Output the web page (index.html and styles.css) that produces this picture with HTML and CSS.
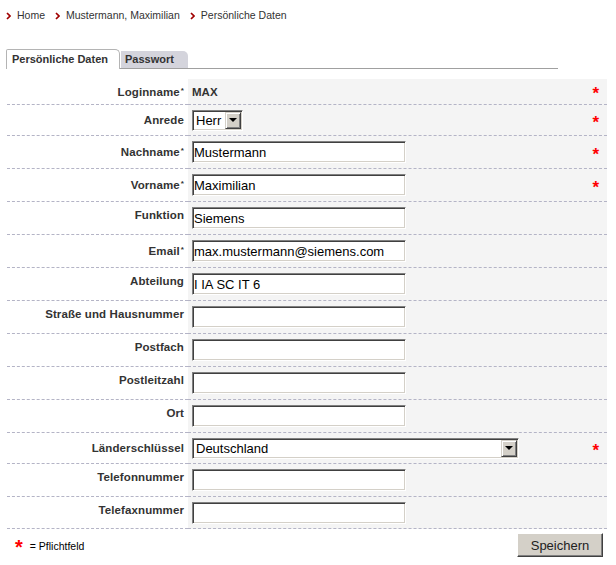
FILE: index.html
```html
<!DOCTYPE html>
<html lang="de">
<head>
<meta charset="utf-8">
<title>Persönliche Daten</title>
<link rel="stylesheet" href="styles.css">
</head>
<body>
<nav class="crumbs">
  <span class="crumb"><svg viewBox="0 0 5 8" class="chev"><polyline points="1,1 4,4 1,7"/></svg>Home</span>
  <span class="crumb"><svg viewBox="0 0 5 8" class="chev"><polyline points="1,1 4,4 1,7"/></svg>Mustermann, Maximilian</span>
  <span class="crumb"><svg viewBox="0 0 5 8" class="chev"><polyline points="1,1 4,4 1,7"/></svg>Persönliche Daten</span>
</nav>

<div class="tabs">
  <span class="tab tab-active">Persönliche Daten</span>
  <span class="tab tab-off">Passwort</span>
</div>

<div class="form">
  <div class="row row-login">
    <div class="label"><span>Loginname<sup>*</sup></span></div>
    <div class="field"><span class="static">MAX</span><span class="req">*</span></div>
  </div>
  <div class="row row-sel">
    <div class="label"><span>Anrede</span></div>
    <div class="field">
      <div class="sel sel-small"><span class="sel-val">Herr</span><span class="sel-btn"><span class="tri"></span></span></div>
      <span class="req">*</span>
    </div>
  </div>
  <div class="row">
    <div class="label"><span>Nachname<sup>*</sup></span></div>
    <div class="field"><input class="inp" type="text" value="Mustermann"><span class="req">*</span></div>
  </div>
  <div class="row">
    <div class="label"><span>Vorname<sup>*</sup></span></div>
    <div class="field"><input class="inp" type="text" value="Maximilian"><span class="req">*</span></div>
  </div>
  <div class="row">
    <div class="label lab-top"><span>Funktion</span></div>
    <div class="field"><input class="inp" type="text" value="Siemens"></div>
  </div>
  <div class="row">
    <div class="label"><span>Email<sup>*</sup></span></div>
    <div class="field"><input class="inp" type="text" value="max.mustermann@siemens.com"></div>
  </div>
  <div class="row">
    <div class="label lab-top"><span>Abteilung</span></div>
    <div class="field"><input class="inp" type="text" value="I IA SC IT 6"></div>
  </div>
  <div class="row">
    <div class="label lab-top"><span>Straße und Hausnummer</span></div>
    <div class="field"><input class="inp" type="text" value=""></div>
  </div>
  <div class="row">
    <div class="label lab-top"><span>Postfach</span></div>
    <div class="field"><input class="inp" type="text" value=""></div>
  </div>
  <div class="row">
    <div class="label lab-top"><span>Postleitzahl</span></div>
    <div class="field"><input class="inp" type="text" value=""></div>
  </div>
  <div class="row">
    <div class="label lab-top"><span>Ort</span></div>
    <div class="field"><input class="inp" type="text" value=""></div>
  </div>
  <div class="row row-sel">
    <div class="label"><span>Länderschlüssel</span></div>
    <div class="field">
      <div class="sel sel-wide"><span class="sel-val">Deutschland</span><span class="sel-btn"><span class="tri"></span></span></div>
      <span class="req">*</span>
    </div>
  </div>
  <div class="row">
    <div class="label lab-top"><span>Telefonnummer</span></div>
    <div class="field"><input class="inp" type="text" value=""></div>
  </div>
  <div class="row row-last">
    <div class="label lab-top"><span>Telefaxnummer</span></div>
    <div class="field"><input class="inp" type="text" value=""></div>
  </div>
</div>

<div class="foot">
  <div class="legend"><span class="legend-star">*</span><span>= Pflichtfeld</span></div>
  <button class="btn" type="button">Speichern</button>
</div>
</body>
</html>
```

FILE: styles.css
```css
body {
  margin: 0;
  font-family: "Liberation Sans", Arial, sans-serif;
  color: #333;
  background: #fff;
}

/* breadcrumb */
.crumbs {
  display: flex;
  gap: 10px;
  margin: 9px 0 0 6px;
  font-size: 10.5px;
  line-height: 13px;
  color: #333;
}
.crumb {
  display: flex;
  align-items: center;
  gap: 6px;
}
.chev {
  width: 5px;
  height: 8px;
}
.chev polyline {
  fill: none;
  stroke: #a00000;
  stroke-width: 1.7;
}

/* tabs */
.tabs {
  display: flex;
  align-items: flex-end;
  width: 552px;
  height: 19px;
  margin: 27px 0 0 6px;
  border-bottom: 1px solid #a0a0a0;
}
.tab {
  box-sizing: border-box;
  font-size: 11px;
  font-weight: bold;
  color: #333;
  white-space: nowrap;
}
.tab-active {
  width: 114px;
  height: 20px;
  margin-bottom: -1px;
  padding-left: 5px;
  line-height: 18px;
  background: #fff;
  border: 1px solid #b4b4b4;
  border-bottom: 0;
  border-radius: 2px 5px 0 0;
}
.tab-off {
  width: 67px;
  height: 17px;
  margin-left: 1px;
  padding-left: 4px;
  line-height: 16px;
  background: #d4d4dc;
  border-radius: 0 5px 0 0;
}

/* form */
.form {
  width: 600px;
  margin: 10px 0 0 7px;
}
.row {
  display: flex;
}
.label {
  width: 181px;
  box-sizing: border-box;
  padding-right: 4px;
  display: flex;
  align-items: center;
  justify-content: flex-end;
  text-align: right;
  font-size: 11.5px;
  letter-spacing: 0.1px;
  font-weight: bold;
  color: #333;
  border-bottom: 1px dashed #b4b4c6;
}
.lab-top {
  padding-bottom: 6px;
}
.label sup {
  font-size: 8px;
  vertical-align: 3px;
  line-height: 0;
  margin-left: 1px;
}
.field {
  flex: 1;
  height: 32px;
  display: flex;
  align-items: center;
  padding: 0 4px;
  background: #f4f4f4;
  border-bottom: 1px dashed #b4b4c6;
}
.row-login .field { height: 25px; }
.row-sel .field { height: 30px; }
.row-last .field { height: 31px; }

.static {
  font-size: 11.5px;
  font-weight: bold;
  color: #333;
}

.req {
  margin-left: auto;
  margin-right: 4px;
  color: #ff0000;
  font-size: 17px;
  font-weight: bold;
  line-height: 11px;
  padding-top: 4px;
}

.inp {
  box-sizing: border-box;
  width: 214px;
  height: 22px;
  margin: 0;
  padding: 0 1px;
  font-family: "Liberation Sans", Arial, sans-serif;
  font-size: 13px;
  color: #000;
  background: #fff;
  border: 1px solid;
  border-color: #808080 #fff #fff #808080;
  box-shadow: inset 1px 1px 0 #404040, inset -1px -1px 0 #d4d0c8;
  outline: none;
}

.sel {
  box-sizing: border-box;
  height: 21px;
  display: flex;
  align-items: center;
  padding: 1px;
  background: #fff;
  border: 1px solid;
  border-color: #808080 #fff #fff #808080;
  box-shadow: inset 1px 1px 0 #404040, inset -1px -1px 0 #d4d0c8;
}
.sel-small { width: 51px; }
.sel-wide { width: 327px; }
.sel-val {
  flex: 1;
  padding-left: 2px;
  font-size: 13px;
  line-height: 17px;
  color: #000;
}
.sel-btn {
  box-sizing: border-box;
  width: 16px;
  height: 17px;
  display: flex;
  align-items: center;
  justify-content: center;
  background: #d4d0c8;
  border: 1px solid;
  border-color: #d4d0c8 #404040 #404040 #d4d0c8;
  box-shadow: inset 1px 1px 0 #fff, inset -1px -1px 0 #808080;
}
.tri {
  width: 0;
  height: 0;
  border-left: 4px solid transparent;
  border-right: 4px solid transparent;
  border-top: 4px solid #000;
}

/* footer */
.foot {
  box-sizing: border-box;
  width: 600px;
  margin-left: 7px;
  padding: 4px 4px 0 8px;
  display: flex;
  justify-content: space-between;
  align-items: flex-start;
}
.legend {
  display: flex;
  align-items: flex-start;
  gap: 7px;
  padding-top: 7px;
  font-size: 10.5px;
  line-height: 13px;
  color: #000;
}
.legend-star {
  color: #ff0000;
  font-size: 20px;
  font-weight: bold;
  line-height: 11px;
  margin-top: 2px;
}
.btn {
  box-sizing: border-box;
  width: 86px;
  height: 24px;
  margin: 0;
  padding: 0;
  font-family: "Liberation Sans", Arial, sans-serif;
  font-size: 13px;
  color: #222;
  background: #d4d0c8;
  border: 1px solid;
  border-color: #fff #404040 #404040 #fff;
  box-shadow: inset -1px -1px 0 #808080;
}
```
